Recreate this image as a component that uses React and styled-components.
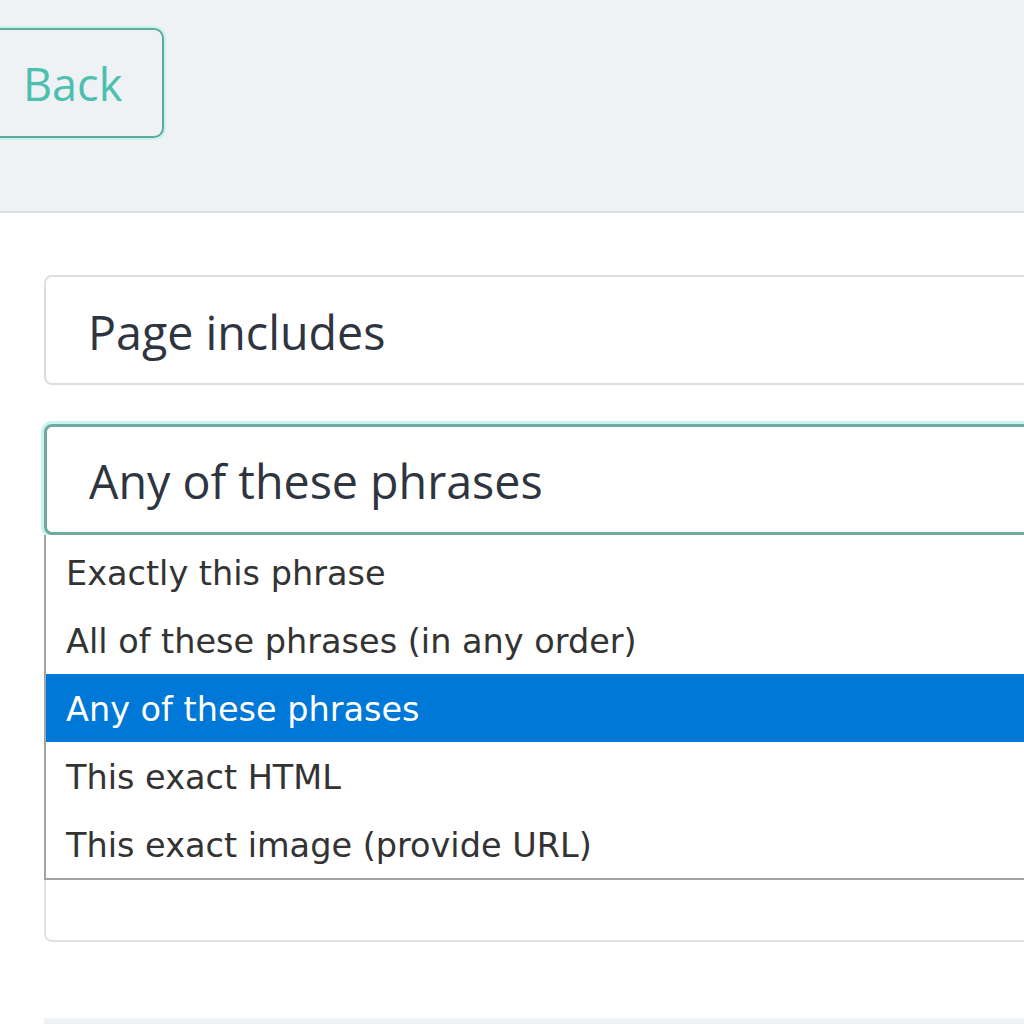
import styled, { createGlobalStyle } from "styled-components"

const GlobalStyle = createGlobalStyle`
    html, body {
        margin: 0;
        padding: 0;
        background: #ffffff;
        overflow: hidden;
    }
    #root {
        width: 1024px;
        overflow: hidden;
    }
`

const Page = styled.div`
    width: 1024px;
    height: 1024px;
    overflow: hidden;
    font-family: "Open Sans", "Noto Sans", sans-serif;
`

const Header = styled.header`
    height: 183px;
    padding-top: 28px;
    background-color: #eef2f5;
    border-bottom: 2px solid #d9dee2;
    display: flex;
    align-items: flex-start;
`

const BackButton = styled.button`
    margin-left: -19px;
    height: 110px;
    padding: 0 40px 0 40px;
    border: 2px solid #5fa9a0;
    border-radius: 10px;
    box-shadow: 0 0 0 2px rgba(170, 245, 235, 0.6);
    background: transparent;
    color: #4dbfae;
    font-family: "Open Sans", "Noto Sans", sans-serif;
    font-size: 45px;
    line-height: 1;
    cursor: pointer;
`

const Main = styled.main`
    padding: 62px 0 0 44px;
    display: flex;
    flex-direction: column;
    gap: 39px;
`

const Field = styled.div`
    position: relative;
    width: 1100px;
`

const SelectBox = styled.div`
    box-sizing: border-box;
    height: ${props => props.$focused ? "111px" : "110px"};
    padding: 4px 0 0 42px;
    display: flex;
    align-items: center;
    border: ${props => props.$focused ? "3px solid #6faaa0" : "2px solid #dedede"};
    border-radius: 8px;
    box-shadow: ${props => props.$focused ? "0 0 0 3px rgba(175, 240, 230, 0.7)" : "none"};
    background: #ffffff;
    color: #2f3540;
    font-size: 46.6px;
    line-height: 1;
`

const Menu = styled.ul`
    position: absolute;
    top: 100%;
    left: 0;
    z-index: 2;
    box-sizing: border-box;
    width: 1100px;
    margin: 0;
    padding: 3px 0 0 0;
    list-style: none;
    background: #ffffff;
    border: 2px solid #a3a3a3;
    border-top: none;
    font-family: "DejaVu Sans", "Noto Sans", sans-serif;
`

const MenuItem = styled.li`
    height: 68px;
    padding: 3px 0 0 20px;
    box-sizing: border-box;
    display: flex;
    align-items: center;
    font-size: 33.5px;
    color: ${props => props.$selected ? "#ffffff" : "#333333"};
    background: ${props => props.$selected ? "#0078d7" : "transparent"};
`

const TextBox = styled.div`
    box-sizing: border-box;
    width: 1100px;
    height: 368px;
    border: 2px solid #e2e2e2;
    border-radius: 8px;
    background: #ffffff;
`

const FooterBar = styled.div`
    margin-top: 37px;
    width: 1100px;
    height: 40px;
    background-color: #eef2f5;
`

const options = [
    "Exactly this phrase",
    "All of these phrases (in any order)",
    "Any of these phrases",
    "This exact HTML",
    "This exact image (provide URL)",
]

const App = () => {
    const selected = "Any of these phrases"
    return (
        <Page>
            <GlobalStyle />
            <Header>
                <BackButton>Back</BackButton>
            </Header>
            <Main>
                <Field>
                    <SelectBox>Page includes</SelectBox>
                </Field>
                <Field>
                    <SelectBox $focused>{selected}</SelectBox>
                    <Menu>
                        {options.map(option => (
                            <MenuItem key={option} $selected={option === selected}>{option}</MenuItem>
                        ))}
                    </Menu>
                </Field>
                <TextBox />
                <FooterBar />
            </Main>
        </Page>
    )
}

export default App
